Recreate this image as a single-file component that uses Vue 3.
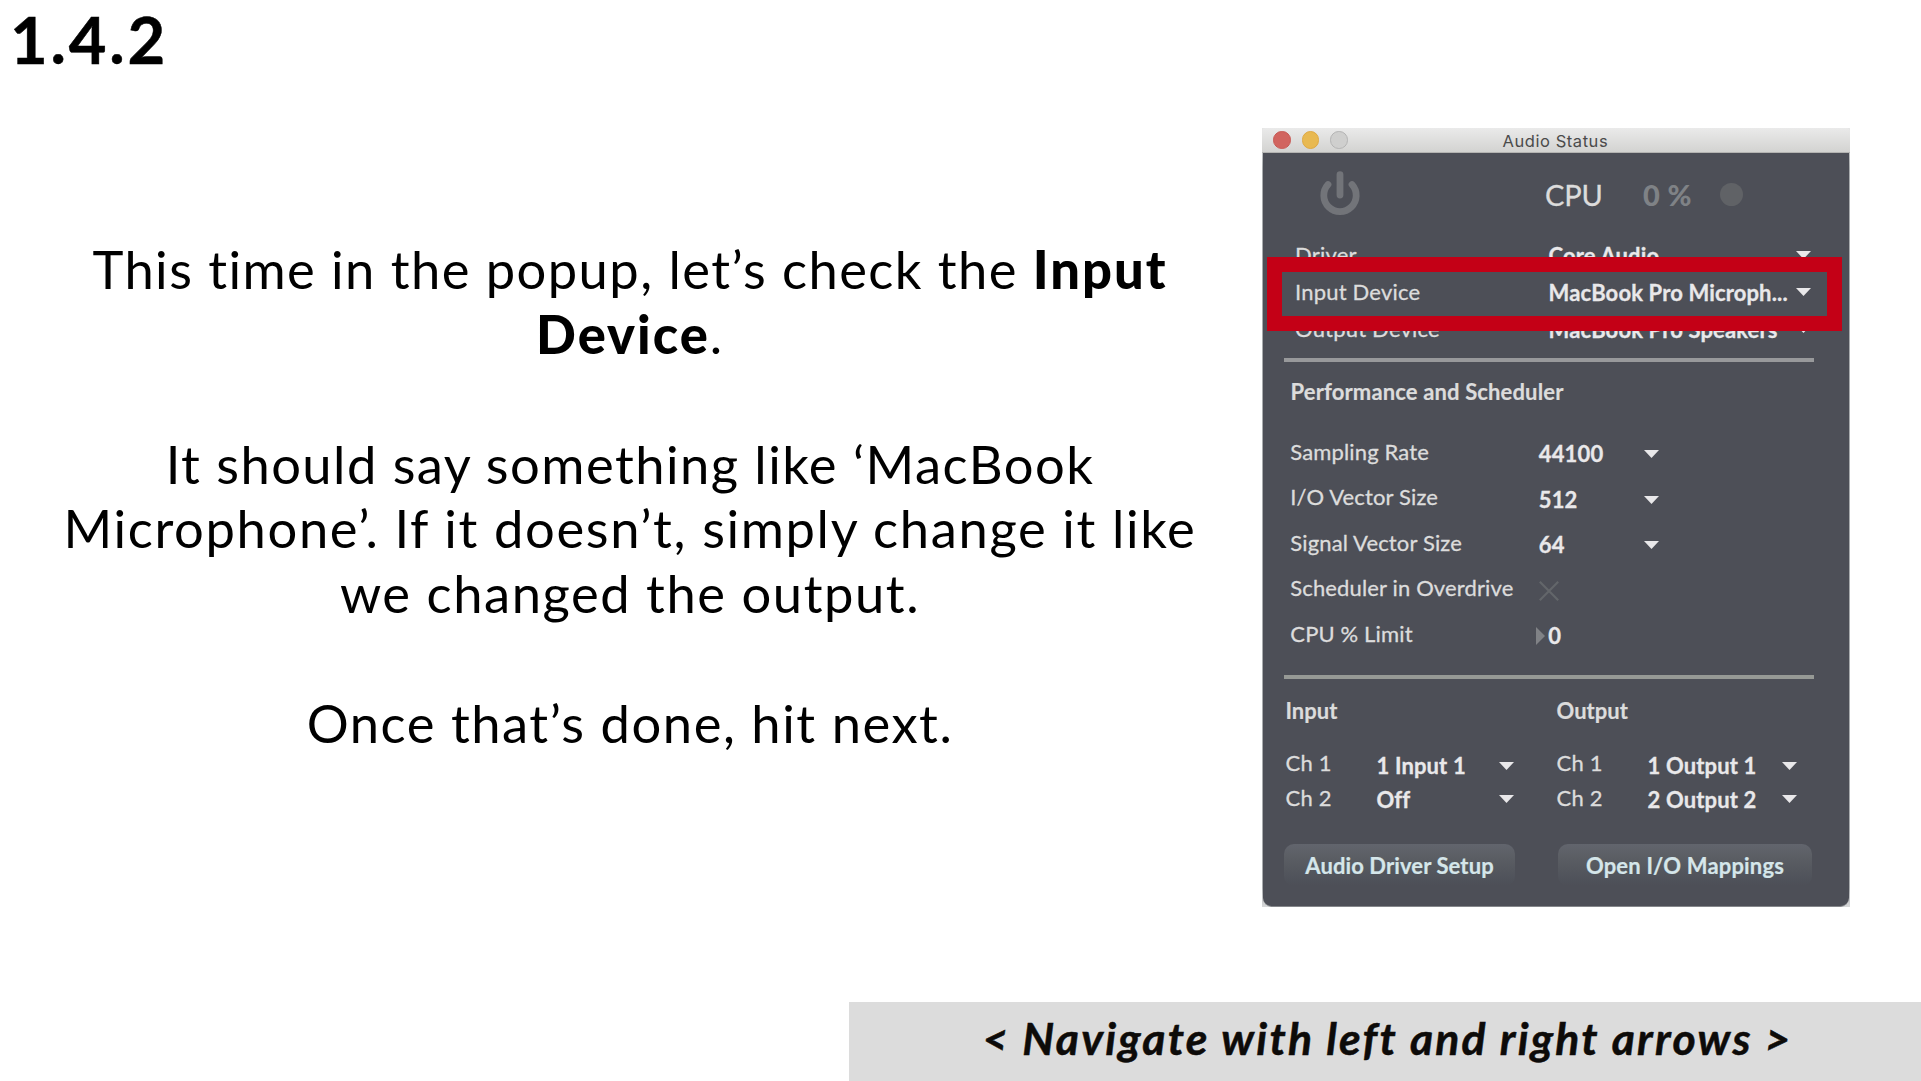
<script setup>
const devices = [
  { label: 'Driver', value: 'Core Audio' },
  { label: 'Input Device', value: 'MacBook Pro Microph...' },
  { label: 'Output Device', value: 'MacBook Pro Speakers' },
]
const settings = [
  { label: 'Sampling Rate', value: '44100', kind: 'menu' },
  { label: 'I/O Vector Size', value: '512', kind: 'menu' },
  { label: 'Signal Vector Size', value: '64', kind: 'menu' },
  { label: 'Scheduler in Overdrive', kind: 'toggle' },
  { label: 'CPU % Limit', value: '0', kind: 'number' },
]
const channels = [
  { title: 'Input', side: 'in', values: ['1 Input 1', 'Off'] },
  { title: 'Output', side: 'out', values: ['1 Output 1', '2 Output 2'] },
]
</script>

<template>
  <div class="page">
    <h1 class="step">1.4.2</h1>

    <main class="content">
      <section class="copy">
        <p>
          <span class="line l1">This time in the popup, let’s check the <b>Input</b></span>
          <span class="line l2"><b>Device</b>.</span>
        </p>
        <p>
          <span class="line l3">It should say something like ‘MacBook</span>
          <span class="line l4">Microphone’. If it doesn’t, simply change it like</span>
          <span class="line l5">we changed the output.</span>
        </p>
        <p><span class="line l5">Once that’s done, hit next.</span></p>
      </section>

      <section class="window">
        <header class="titlebar">
          <i class="light close"></i><i class="light minimise"></i><i class="light zoom"></i>
          <span class="caption">Audio Status</span>
        </header>

        <div class="panel">
          <div class="status">
            <svg class="power" width="42" height="46" viewBox="0 0 42 46">
              <path d="M9 14.5A16.2 16.2 0 1 0 33 14.5M21 4.6V25" fill="none" stroke="#727479" stroke-width="6.8" stroke-linecap="round" />
            </svg>
            <span class="cpu">CPU</span>
            <span class="load">0 %</span>
            <i class="dot"></i>
          </div>

          <div class="devices">
            <div v-for="d in devices" :key="d.label" class="device">
              <span class="label">{{ d.label }}</span>
              <span class="value">{{ d.value }}</span>
              <svg class="arrow" width="15" height="8" viewBox="0 0 15 8"><path d="M0 0H15L7.5 8Z" /></svg>
            </div>
          </div>

          <hr class="rule" />

          <h2 class="heading perf">Performance and Scheduler</h2>
          <div v-for="s in settings" :key="s.label" class="setting">
            <span class="label">{{ s.label }}</span>
            <template v-if="s.kind === 'menu'">
              <span class="value">{{ s.value }}</span>
              <svg class="arrow" width="15" height="8" viewBox="0 0 15 8"><path d="M0 0H15L7.5 8Z" /></svg>
            </template>
            <svg v-else-if="s.kind === 'toggle'" class="cross" width="20" height="20" viewBox="0 0 20 20">
              <path d="M0.8 0.8L19.2 19.2M19.2 0.8L0.8 19.2" stroke="#63666a" stroke-width="2.2" />
            </svg>
            <span v-else class="value number">
              <svg width="9" height="18" viewBox="0 0 9 18"><path d="M0 0L9 9L0 18Z" fill="#808286" /></svg>{{ s.value }}
            </span>
          </div>

          <hr class="rule second" />

          <div class="io">
            <div v-for="c in channels" :key="c.title" :class="['side', c.side]">
              <h2 class="heading">{{ c.title }}</h2>
              <div class="chans">
                <div class="names"><span>Ch 1</span><span>Ch 2</span></div>
                <div class="picks">
                  <div v-for="v in c.values" :key="v" class="pick">
                    <span class="value">{{ v }}</span>
                    <svg class="arrow" width="15" height="8" viewBox="0 0 15 8"><path d="M0 0H15L7.5 8Z" /></svg>
                  </div>
                </div>
              </div>
            </div>
          </div>

          <div class="buttons">
            <button class="setup">Audio Driver Setup</button>
            <button class="mappings">Open I/O Mappings</button>
          </div>
        </div>

        <div class="highlight"></div>
      </section>
    </main>

    <footer class="nav"><span>&lt; Navigate with left and right arrows &gt;</span></footer>
  </div>
</template>

<style>
body { margin: 0; background: #fff; }
</style>

<style scoped>
.page {
  width: 1921px;
  height: 1081px;
  overflow: hidden;
  display: flex;
  flex-direction: column;
  background: #fff;
  color: #000;
  font-family: Lato, "Liberation Sans", sans-serif;
}
.step {
  margin: 0;
  padding: 0 0 0 10px;
  height: 128px;
  box-sizing: border-box;
  font-size: 65px;
  line-height: 78px;
  font-weight: 700;
  letter-spacing: 2.8px;
  -webkit-text-stroke: 0.5px;
}
.content { display: flex; height: 874px; align-items: flex-start; }
.copy { width: 1260px; padding-top: 109.3px; font-size: 52.5px; line-height: 64.8px; text-align: center; }
.copy p { margin: 0 0 64.8px; }
.line { display: block; white-space: nowrap; }
.l1 { letter-spacing: 1.43px; }
.l2 { letter-spacing: 1.8px; }
.l3 { letter-spacing: 1.45px; }
.l4 { letter-spacing: 1.63px; }
.l5 { letter-spacing: 1.54px; }
b { font-weight: 900; letter-spacing: 2px; }

.window { position: relative; width: 588px; height: 779px; margin-left: 2px; background: linear-gradient(#e6e6e6, #a9acae 40px, #a9acae 760px, #d8d9da); }
.titlebar {
  display: flex;
  align-items: center;
  height: 25px;
  padding: 0 11px;
  box-sizing: border-box;
  border-bottom: 1px solid #b4b4b2;
  border-radius: 4px 4px 0 0;
  background: linear-gradient(#eaeaea, #d3d3d1);
}
.light { width: 17.5px; height: 17.5px; border-radius: 50%; box-sizing: border-box; margin-right: 11px; }
.close { background: #d1645f; border: 1px solid #c85a55; }
.minimise { background: #e8b952; border: 1px solid #dfa943; }
.zoom { background: #cfcfce; border: 1px solid #b4b4b4; }
.caption { margin-left: 144px; padding-top: 1px; font: 400 16.5px/24px Inter, sans-serif; letter-spacing: 0.56px; color: #4b4b4b; }
.panel {
  height: 754px;
  margin: 0 1px;
  box-sizing: border-box;
  background: #4d4f57;
  border-radius: 0 0 9px 9px;
  border-bottom: 1px solid #85878b;
  font-size: 22px;
  line-height: 24px;
  letter-spacing: 0.14px;
  color: #dcdcdc;
}
.status { display: flex; align-items: center; height: 83px; padding-left: 56px; }
.power { margin-top: -4px; }
.cpu { width: 98px; margin-left: 184px; font-size: 29px; letter-spacing: -0.2px; -webkit-text-stroke: 0.3px; }
.load { width: 77px; font-size: 29px; font-weight: 900; letter-spacing: 0.4px; color: #7f8286; }
.dot { width: 23px; height: 23px; border-radius: 50%; background: #606266; }

.value { font-weight: 700; color: #e9e8ea; white-space: nowrap; -webkit-text-stroke: 0.3px; }
.arrow { fill: #e9e8ea; display: block; }
.label { white-space: nowrap; -webkit-text-stroke: 0.3px; }
.device { display: flex; align-items: center; height: 37px; padding-left: 32px; }
.device .label { width: 253.5px; letter-spacing: 0.2px; }
.device .value { width: 247.5px; padding-top: 2px; }

.rule { height: 4px; width: 530px; margin: 11px 0 0 21px; border: 0; background: #98999b; }
.rule.second { margin-top: 18.7px; background: #969995; }
.heading { margin: 0; font-size: 22px; line-height: 24px; font-weight: 700; -webkit-text-stroke: 0.2px; }
.perf { padding: 17.5px 0 25.8px 27.5px; }
.setting { display: flex; align-items: center; height: 45.4px; padding-left: 27.3px; }
.setting .label { width: 248.5px; }
.setting .value { width: 105px; padding-top: 5px; }
.setting .arrow { margin-top: 4.4px; }
.setting .cross { margin: 5px 0 0 0.2px; }
.setting .number { display: flex; align-items: center; gap: 3px; margin-left: -2.5px; }

.io { display: flex; padding-top: 20.4px; height: 115.6px; }
.side.in { width: 271px; padding-left: 22.5px; }
.side { flex: none; }
.side .heading { letter-spacing: 0; }
.chans { display: flex; padding-top: 21.6px; }
.names { display: flex; flex-direction: column; width: 91px; line-height: 35px; letter-spacing: 0.2px; -webkit-text-stroke: 0.3px; }
.picks { padding-top: 4px; }
.pick { display: flex; align-items: center; height: 33.5px; }
.pick .value { width: 122.5px; padding-top: 1px; }
.out .pick .value { width: 134.5px; }

.buttons { display: flex; gap: 43px; padding: 29px 0 0 21px; }
button {
  height: 42px;
  padding: 0;
  border: 0;
  border-radius: 10px;
  background: linear-gradient(#62656d, #5a5d63 35%, #4e5159 90%, #4d4f57);
  font: 700 22px/43px Lato, sans-serif;
  color: #d5e6ea;
  -webkit-text-stroke: 0.2px;
}
.setup { width: 231px; letter-spacing: 0.1px; }
.mappings { width: 254px; letter-spacing: 0.18px; }

.highlight {
  position: absolute;
  left: 4.5px;
  top: 129px;
  width: 575.5px;
  height: 74px;
  box-sizing: border-box;
  border: 15px solid #c40016;
}
.nav {
  display: flex;
  align-items: center;
  justify-content: center;
  width: 1072px;
  height: 79px;
  margin-left: 849px;
  box-sizing: border-box;
  padding: 0 0 7.5px 5px;
  background: #dcdcdc;
  color: #0d0b09;
  font-size: 44.5px;
  font-weight: 700;
  font-style: italic;
  letter-spacing: 2.2px;
  white-space: nowrap;
  -webkit-text-stroke: 0.5px;
}
</style>
